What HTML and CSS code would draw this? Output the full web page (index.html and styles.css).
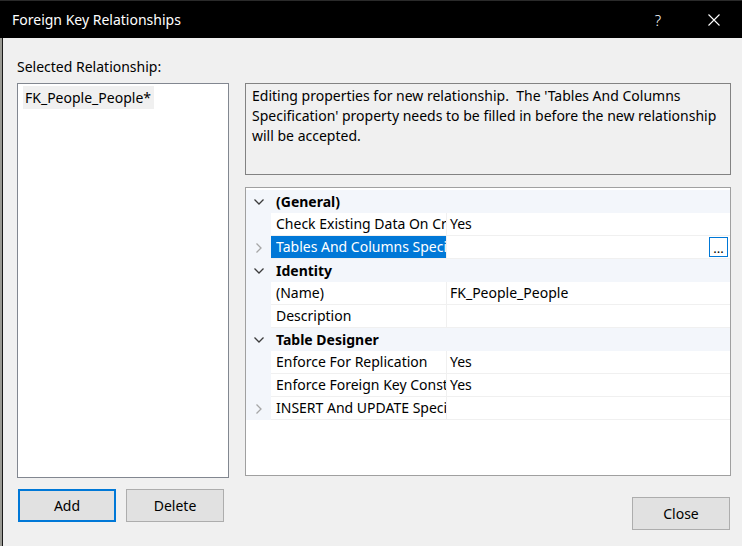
FILE: index.html
```html
<!DOCTYPE html>
<html>
<head>
<meta charset="utf-8">
<link rel="stylesheet" href="styles.css">
</head>
<body>
<div class="window">
  <div class="titlebar">
    <span class="title">Foreign Key Relationships</span>
    <span class="capbtn help">?</span>
    <span class="capbtn closex">
      <svg width="12" height="12" viewBox="0 0 12 12"><path d="M0.5 0.5 L11.5 11.5 M11.5 0.5 L0.5 11.5" stroke="#fff" stroke-width="1.1" fill="none"/></svg>
    </span>
  </div>
  <div class="frame">
    <div class="edge"></div>
    <div class="dialog">
      <div class="leftcol">
        <div class="label">Selected Relationship:</div>
        <div class="listbox">
          <div class="item">FK_People_People*</div>
        </div>
        <div class="btnrow">
          <div class="btn primary">Add</div>
          <div class="btn">Delete</div>
        </div>
      </div>
      <div class="rightcol">
        <div class="desc">Editing properties for new relationship.&nbsp; The 'Tables And Columns Specification' property needs to be filled in before the new relationship will be accepted.</div>
        <div class="pgrid">
          <div class="row cat">
            <div class="m"><svg width="10" height="6" viewBox="0 0 10 6"><path d="M0.5 0.5 L5 5 L9.5 0.5" stroke="#3c3c3c" stroke-width="1.3" fill="none"/></svg></div>
            <div class="cname">(General)</div>
          </div>
          <div class="row">
            <div class="m"></div>
            <div class="n"><span class="clip">Check Existing Data On Creation Or Re-Enabling</span></div>
            <div class="v">Yes</div>
          </div>
          <div class="row">
            <div class="m"><svg width="6" height="10" viewBox="0 0 6 10"><path d="M0.5 0.5 L5 5 L0.5 9.5" stroke="#a6a6a6" stroke-width="1.3" fill="none"/></svg></div>
            <div class="n sel"><span class="clip">Tables And Columns Specification</span></div>
            <div class="v"><span class="ellip">...</span></div>
          </div>
          <div class="row cat">
            <div class="m"><svg width="10" height="6" viewBox="0 0 10 6"><path d="M0.5 0.5 L5 5 L9.5 0.5" stroke="#3c3c3c" stroke-width="1.3" fill="none"/></svg></div>
            <div class="cname">Identity</div>
          </div>
          <div class="row">
            <div class="m"></div>
            <div class="n">(Name)</div>
            <div class="v">FK_People_People</div>
          </div>
          <div class="row">
            <div class="m"></div>
            <div class="n">Description</div>
            <div class="v"></div>
          </div>
          <div class="row cat">
            <div class="m"><svg width="10" height="6" viewBox="0 0 10 6"><path d="M0.5 0.5 L5 5 L9.5 0.5" stroke="#3c3c3c" stroke-width="1.3" fill="none"/></svg></div>
            <div class="cname">Table Designer</div>
          </div>
          <div class="row">
            <div class="m"></div>
            <div class="n">Enforce For Replication</div>
            <div class="v">Yes</div>
          </div>
          <div class="row">
            <div class="m"></div>
            <div class="n"><span class="clip">Enforce Foreign Key Constraint</span></div>
            <div class="v">Yes</div>
          </div>
          <div class="row">
            <div class="m"><svg width="6" height="10" viewBox="0 0 6 10"><path d="M0.5 0.5 L5 5 L0.5 9.5" stroke="#a6a6a6" stroke-width="1.3" fill="none"/></svg></div>
            <div class="n"><span class="clip">INSERT And UPDATE Specification</span></div>
            <div class="v"></div>
          </div>
        </div>
        <div class="closerow">
          <div class="btn">Close</div>
        </div>
      </div>
    </div>
  </div>
</div>
</body>
</html>
```

FILE: styles.css
```css
html, body {
  margin: 0;
  padding: 0;
}
body {
  width: 742px;
  height: 546px;
  overflow: hidden;
  background: #f0f0f0;
  font-family: "Noto Sans", "Open Sans", sans-serif;
  font-size: 14px;
  color: #000;
}
.window {
  width: 742px;
  height: 546px;
  display: flex;
  flex-direction: column;
}
.titlebar {
  height: 38px;
  background: #000;
  border-top: 1px solid #2a2a2a;
  box-sizing: border-box;
  display: flex;
  align-items: center;
  color: #fff;
}
.title {
  margin-left: 12px;
  font-size: 14px;
  flex: 1;
}
.capbtn {
  width: 56px;
  height: 100%;
  display: flex;
  align-items: center;
  justify-content: center;
}
.help {
  font-size: 15px;
  font-weight: 300;
}
.frame {
  flex: 1;
  display: flex;
}
.edge {
  width: 2px;
  background: #9a9a94;
  border-right: 1px solid #1a1a1a;
}
.dialog {
  flex: 1;
  display: flex;
  padding: 19px 0 0 14px;
  gap: 16px;
}
.leftcol {
  width: 212px;
  display: flex;
  flex-direction: column;
}
.label {
  height: 20px;
  line-height: 20px;
  margin-bottom: 6px;
}
.listbox {
  height: 395px;
  box-sizing: border-box;
  background: #fff;
  border: 1px solid #828790;
  padding: 2px 0 0 5px;
}
.item {
  display: inline-block;
  background: #f0f0f0;
  height: 23px;
  line-height: 23px;
  padding: 0 3px 0 2px;
}
.btnrow {
  display: flex;
  gap: 10px;
  margin-top: 11px;
  padding-left: 1px;
}
.btn {
  width: 98px;
  height: 33px;
  box-sizing: border-box;
  background: #e1e1e1;
  border: 1px solid #adadad;
  display: flex;
  align-items: center;
  justify-content: center;
}
.btn.primary {
  border: 2px solid #0078d7;
}
.rightcol {
  width: 486px;
  display: flex;
  flex-direction: column;
  padding-top: 26px;
}
.desc {
  height: 92px;
  box-sizing: border-box;
  border: 1px solid #828282;
  padding: 2px 6px 0 6px;
  line-height: 20px;
}
.pgrid {
  margin-top: 12px;
  height: 289px;
  box-sizing: border-box;
  border: 1px solid #a0a0a0;
  background: #fff;
  padding-top: 2px;
}
.row {
  height: 23px;
  display: flex;
}
.m {
  width: 25px;
  background: #f3f6fb;
  display: flex;
  align-items: center;
  justify-content: center;
}
.row.cat {
  background: #f3f6fb;
}
.cname {
  font-weight: bold;
  padding-left: 5px;
  line-height: 23px;
}
.n {
  width: 175px;
  box-sizing: border-box;
  padding-left: 5px;
  white-space: nowrap;
  overflow: hidden;
  line-height: 22px;
  border-bottom: 1px solid #f0f0f0;
}
.clip {
  display: block;
  width: 170px;
  overflow: hidden;
  white-space: nowrap;
}
.n.sel {
  background: #0078d7;
  color: #fff;
}
.v {
  flex: 1;
  border-left: 1px solid #f0f0f0;
  border-bottom: 1px solid #f0f0f0;
  padding-left: 3px;
  line-height: 22px;
  display: flex;
  align-items: center;
}
.ellip {
  margin-left: auto;
  margin-right: 2px;
  width: 19px;
  height: 20px;
  box-sizing: border-box;
  border: 1px solid #0078d7;
  background: #fff;
  display: flex;
  align-items: flex-end;
  justify-content: center;
  font-size: 13px;
  line-height: 16px;
}
.closerow {
  display: flex;
  justify-content: flex-end;
  margin-top: 21px;
  padding-right: 1px;
}
```
